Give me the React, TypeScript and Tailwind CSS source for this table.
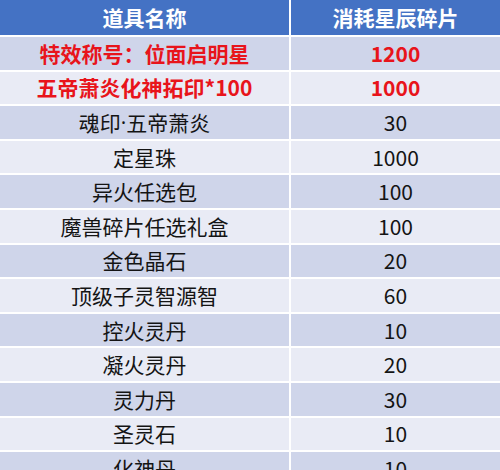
import React from "react";

const rows: { name: React.ReactNode; cost: string; red?: boolean }[] = [
  { name: "特效称号：位面启明星", cost: "1200", red: true },
  { name: "五帝萧炎化神拓印*100", cost: "1000", red: true },
  {
    name: (
      <>
        魂印
        <span className="font-['Open_Sans',sans-serif]">·</span>
        五帝萧炎
      </>
    ),
    cost: "30",
  },
  { name: "定星珠", cost: "1000" },
  { name: "异火任选包", cost: "100" },
  { name: "魔兽碎片任选礼盒", cost: "100" },
  { name: "金色晶石", cost: "20" },
  { name: "顶级子灵智源智", cost: "60" },
  { name: "控火灵丹", cost: "10" },
  { name: "凝火灵丹", cost: "20" },
  { name: "灵力丹", cost: "30" },
  { name: "圣灵石", cost: "10" },
  { name: "化神丹", cost: "10" },
];

export default function App() {
  return (
    <div
      className="w-[500px] h-[470px] overflow-hidden bg-white"
      style={{ fontFamily: '"Noto Sans CJK SC", "Noto Sans", sans-serif' }}
    >
      <div className="grid grid-cols-[289px_1fr] gap-x-[2px] h-[35px] bg-white">
        <div className="bg-[#4472C4] flex items-center justify-center text-white font-bold text-[21px] leading-none">
          道具名称
        </div>
        <div className="bg-[#4472C4] flex items-center justify-center text-white font-bold text-[21px] leading-none">
          消耗星辰碎片
        </div>
      </div>
      {rows.map((r, i) => {
        const bg = i % 2 === 0 ? "bg-[#CFD5EA]" : "bg-[#E9EBF5]";
        const txt = r.red
          ? "text-[#E8141B] font-bold"
          : "text-[#141414] font-normal";
        return (
          <div
            key={i}
            className="grid grid-cols-[289px_1fr] gap-x-[2px] border-t-2 border-white h-[34.6px] bg-white"
          >
            <div
              className={`${bg} ${txt} flex items-center justify-center text-[21px] leading-none whitespace-nowrap`}
            >
              {r.name}
            </div>
            <div
              className={`${bg} ${txt} flex items-center justify-center text-[21px] leading-none`}
            >
              {r.cost}
            </div>
          </div>
        );
      })}
    </div>
  );
}
